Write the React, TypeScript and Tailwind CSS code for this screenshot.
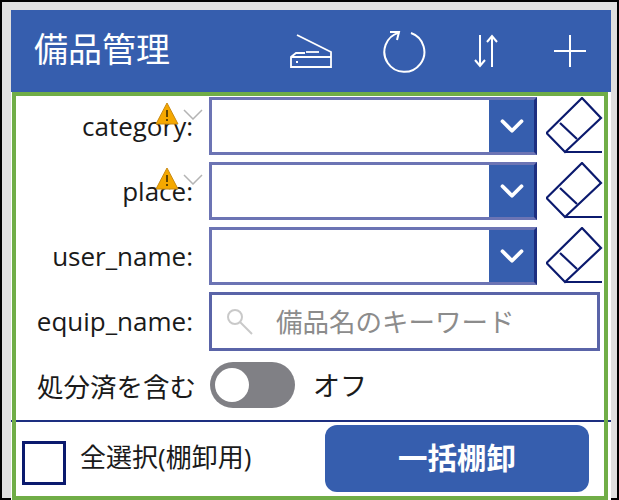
import { ChevronDown } from "lucide-react";

function ScannerIcon() {
  return (
    <svg width="42" height="36" viewBox="0 0 42 36" fill="none" stroke="white" strokeWidth="1.8" className="mt-[2px] ml-[-1px]">
      <path d="M7 1 L41 18 V33 H1 V23 L6 19 H15" />
      <path d="M1 23 H41" />
      <path d="M16 18 H29" />
      <path d="M6 28 H8" />
    </svg>
  );
}

function RefreshIcon() {
  return (
    <svg width="44" height="44" viewBox="0 0 44 44" fill="none" stroke="white" strokeWidth="2">
      <path d="M29 4 A20 20 0 1 1 17 3.6" />
      <path d="M8 3 H17 L15 11" />
    </svg>
  );
}

function SortIcon() {
  return (
    <svg width="24" height="36" viewBox="0 0 24 36" fill="none" stroke="white" strokeWidth="2">
      <path d="M6 2 V33" />
      <path d="M1 27 L6 33 L11 27" />
      <path d="M18 34 V3" />
      <path d="M13 9 L18 3 L23 9" />
    </svg>
  );
}

function PlusIcon() {
  return (
    <svg width="32" height="32" viewBox="0 0 32 32" fill="none" stroke="white" strokeWidth="2">
      <path d="M0 16 H32" />
      <path d="M16 0 V32" />
    </svg>
  );
}

function EraserIcon() {
  return (
    <svg width="57" height="58" viewBox="0 0 57 58" fill="none" stroke="#0b1a6e" strokeWidth="2.2" className="shrink-0">
      <path d="M36 1 L55 21 L19 55 L0.5 36 Z" />
      <path d="M14 26 L31 42" />
      <path d="M19 55 H56" />
    </svg>
  );
}

function WarningBadge() {
  return (
    <>
      <svg width="24" height="23" viewBox="0 0 24 23" className="absolute left-[139px] top-[5px]">
        <path d="M12 1 L23 22 H1 Z" fill="#f5a800" stroke="#c98a10" strokeWidth="1" />
        <path d="M12 8 V15" stroke="#3c2c00" strokeWidth="1.6" />
        <path d="M12 17 V19" stroke="#3c2c00" strokeWidth="1.6" />
      </svg>
      <svg width="20" height="11" viewBox="0 0 20 11" fill="none" stroke="#b4b4b4" strokeWidth="1.5" className="absolute left-[167px] top-[12px]">
        <path d="M1 1 L10 10 L19 1" />
      </svg>
    </>
  );
}

function ComboRow({ label, warning }: { label: string; warning?: boolean }) {
  return (
    <div className="relative flex h-[58px] items-center">
      <div className="w-[177px] text-right text-[26px] text-[#1a1a1a]">{label}</div>
      <div className="ml-[16px] flex h-full w-[328px] border-[3px] border-[#6c74b4] border-r-[#1d2f80] bg-white">
        <div className="flex-1" />
        <div className="flex w-[45px] items-center justify-center bg-[#365eae]">
          <ChevronDown size={38} color="white" strokeWidth={2.4} />
        </div>
      </div>
      <div className="ml-[9px]">
        <EraserIcon />
      </div>
      {warning && <WarningBadge />}
    </div>
  );
}

export default function App() {
  return (
    <div className="h-[500px] w-[619px] border-2 border-black bg-[#dfdfdf] pl-[9px] pt-[8px] font-['Open_Sans','Noto_Sans_CJK_JP',sans-serif]">
      <div className="relative flex h-[490px] w-[600px] flex-col bg-white">
        <header className="flex h-[82px] shrink-0 items-center bg-[#365eae] pl-[23px] text-white">
          <h1 className="mb-[5px] w-[136px] shrink-0 whitespace-nowrap text-[34px] leading-none">備品管理</h1>
          <div className="ml-[121px] flex items-center">
            <ScannerIcon />
            <div className="ml-[50px]">
              <RefreshIcon />
            </div>
            <div className="ml-[48px]">
              <SortIcon />
            </div>
            <div className="ml-[56px]">
              <PlusIcon />
            </div>
          </div>
        </header>

        <div className="absolute left-0 right-0 top-[410px] h-[2px] bg-[#1d2f80]" />

        <main className="relative mb-0 ml-[1px] mr-[3px] flex h-[408px] flex-col border-4 border-[#70ad47] pt-[1px]">
          <div className="flex flex-col gap-[7px]">
            <ComboRow label="category:" warning />
            <ComboRow label="place:" warning />
            <ComboRow label="user_name:" />
          </div>

          <div className="mt-[7px] flex h-[59px] items-center">
            <div className="w-[177px] text-right text-[26px] text-[#1a1a1a]">equip_name:</div>
            <div className="ml-[16px] flex h-full w-[391px] items-center border-[3px] border-[#5a64a8] pl-[14px]">
              <svg width="28" height="28" viewBox="0 0 28 28" fill="none" stroke="#c9c9c9" strokeWidth="2">
                <circle cx="9" cy="9" r="7" />
                <path d="M14 14 L26 26" />
              </svg>
              <span className="ml-[22px] pt-[2px] text-[26.5px] leading-none text-[#8c8c8c]">備品名のキーワード</span>
            </div>
          </div>

          <div className="mt-[11px] flex h-[46px] items-center">
            <div className="w-[180px] whitespace-nowrap pt-[5px] text-right text-[26.5px] text-[#1a1a1a]">処分済を含む</div>
            <div className="ml-[14px] flex h-[46px] w-[85px] items-center rounded-full bg-[#808085] pl-[5px]">
              <div className="h-[34px] w-[34px] rounded-full bg-white" />
            </div>
            <span className="ml-[18px] pt-[2px] text-[27px] text-[#1a1a1a]">オフ</span>
          </div>

          <div className="mt-[12px] flex flex-1 items-center pl-[6px] pr-[15px]">
            <div className="mt-[10px] h-[44px] w-[44px] border-[3px] border-[#0b1a6e]" />
            <span className="mb-[2px] ml-[14px] whitespace-nowrap text-[26px] text-[#1a1a1a]">全選択(棚卸用)</span>
            <button className="ml-auto h-[67px] w-[264px] rounded-[12px] bg-[#365eae] text-[29.5px] font-bold text-white">一括棚卸</button>
          </div>
        </main>
      </div>
    </div>
  );
}
